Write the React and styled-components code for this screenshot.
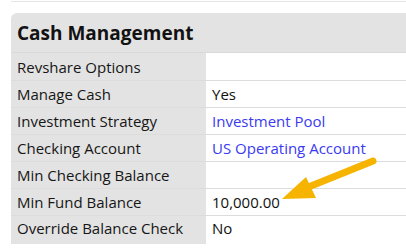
import React from 'react';
import styled, { createGlobalStyle } from 'styled-components';

const GlobalStyle = createGlobalStyle`
  html, body {
    margin: 0;
    padding: 0;
    background: #fff;
  }
  body {
    font-family: "Open Sans", "DejaVu Sans", sans-serif;
    color: #161616;
    overflow: hidden;
  }
`;

const Page = styled.div`
  width: 406px;
  height: 250px;
  padding-left: 11px;
  box-sizing: border-box;
  position: relative;
`;

const TopRule = styled.div`
  height: 1px;
  margin-top: 1px;
  background: #e4e4e4;
`;

const Panel = styled.section`
  margin-top: 11px;
  border-top-left-radius: 6px;
  overflow: hidden;
`;

const Header = styled.h2`
  margin: 0;
  height: 40px;
  display: flex;
  align-items: center;
  padding-left: 6px;
  background: #e3e3e3;
  border-bottom: 1px solid #d9d9d9;
  font-size: 19px;
  font-weight: 700;
  color: #121212;
  box-sizing: border-box;
`;

const Row = styled.div`
  display: grid;
  grid-template-columns: 195px 1fr;
  height: ${p => (p.$last ? 29 : 27)}px;
  box-sizing: border-box;
  border-top: ${p => (p.$first ? 'none' : '1px solid #dcdcdc')};
`;

const Label = styled.div`
  background: #e3e3e3;
  padding-left: 6px;
  display: flex;
  align-items: ${p => (p.$last ? 'flex-start' : 'center')};
  padding-top: ${p => (p.$last ? '2px' : '0')};
  font-size: 15px;
  color: #161616;
  white-space: nowrap;
`;

const Value = styled.div`
  padding-left: 6px;
  display: flex;
  align-items: ${p => (p.$last ? 'flex-start' : 'center')};
  padding-top: ${p => (p.$last ? '2px' : '0')};
  font-size: 15px;
  color: ${p => (p.$link ? '#3a3af2' : '#111')};
  background: #fff;
  white-space: nowrap;
`;

const Arrow = styled.svg`
  position: absolute;
  left: 270px;
  top: 90px;
  width: 120px;
  height: 120px;
  pointer-events: none;
`;

const rows = [
  { label: 'Revshare Options', value: '' },
  { label: 'Manage Cash', value: 'Yes' },
  { label: 'Investment Strategy', value: 'Investment Pool', link: true },
  { label: 'Checking Account', value: 'US Operating Account', link: true },
  { label: 'Min Checking Balance', value: '' },
  { label: 'Min Fund Balance', value: '10,000.00' },
  { label: 'Override Balance Check', value: 'No' },
];

export default function App() {
  return (
    <>
      <GlobalStyle />
      <Page>
        <TopRule />
        <Panel>
          <Header>Cash Management</Header>
          {rows.map((r, i) => {
            const last = i === rows.length - 1;
            return (
              <Row key={r.label} $first={i === 0} $last={last}>
                <Label $last={last}>{r.label}</Label>
                <Value $link={r.link} $last={last}>{r.value}</Value>
              </Row>
            );
          })}
        </Panel>
        <Arrow viewBox="0 0 120 120">
          <line x1="103" y1="70" x2="36" y2="97" stroke="#f6b400" strokeWidth="7" strokeLinecap="round" />
          <polygon points="12,108 36,86 46,107" fill="#f6b400" />
        </Arrow>
      </Page>
    </>
  );
}
